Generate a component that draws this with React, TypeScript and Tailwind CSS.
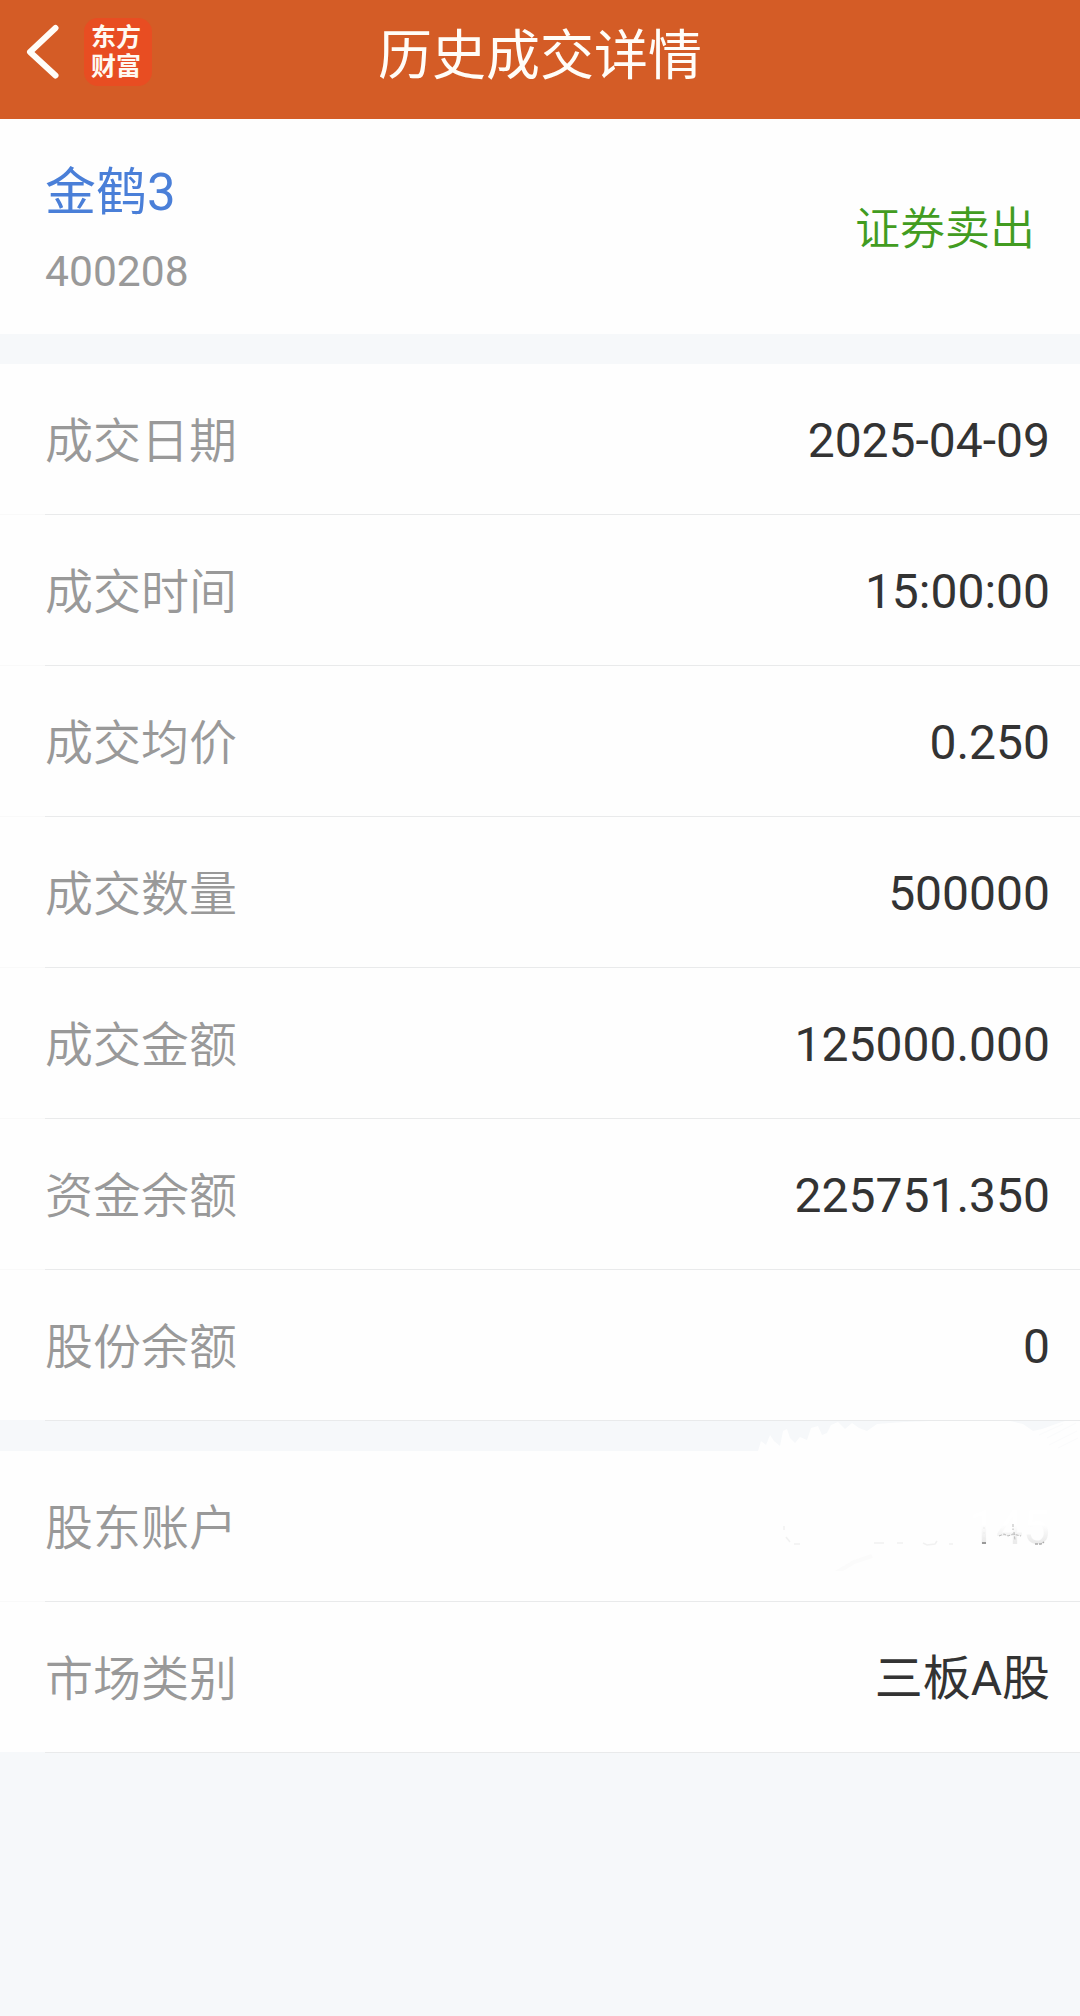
interface DetailItem {
  label: string;
  value?: string;
}

const tradeDetails: DetailItem[] = [
  { label: "成交日期", value: "2025-04-09" },
  { label: "成交时间", value: "15:00:00" },
  { label: "成交均价", value: "0.250" },
  { label: "成交数量", value: "500000" },
  { label: "成交金额", value: "125000.000" },
  { label: "资金余额", value: "225751.350" },
  { label: "股份余额", value: "0" },
];

const accountDetails: DetailItem[] = [
  { label: "股东账户" },
  { label: "市场类别", value: "三板A股" },
];

const BackIcon = () => (
  <svg width="34" height="56" viewBox="0 0 34 56" fill="none">
    <path
      d="M30.500 4 5 28 30.500 51.500"
      stroke="#fffdf8"
      strokeWidth="6"
      strokeLinecap="round"
      strokeLinejoin="round"
    />
  </svg>
);

const Logo = () => (
  <div className="flex h-17 w-17 flex-col items-center justify-center rounded-[14px] bg-[#e84d22] pr-1 text-[25px] leading-[29px] font-bold text-[#fffaf2]">
    <span>东方</span>
    <span>财富</span>
  </div>
);

// Wiped account number: a white brush stroke and what is left of the digits
const WipedAccount = () => (
  <>
    <svg
      className="absolute -top-[30px] right-0"
      width="340"
      height="150"
      viewBox="0 0 340 150"
      fill="none"
    >
      <path
        d="M18 30 21 20 26 24 30 14 34 20 40 25 43 10 47 8 50 17 55 22 60 16 67 19 71 7 78 5 82 14 87 12 91 4 98 1 105 8 112 2 119 7 127 10 137 3 150 2 165 1 190 0H270L283 3 293 10 302 8 316 3 325 0H340V31H18Z"
        fill="#fefefe"
      />
      <path d="m299 14 24-11M307 17l29-15M309 24l28-14M318 27l20-10" stroke="#fafbfc" />
      <path d="m85 163 9-10 20-12 18-6" stroke="#fbfbfb" strokeWidth="4" />
      <path
        d="M44 105v4M46 116l4 5M54 123h6M134 122h10M157 122h6M183 122l4 2 8-1 2-3M209 123h4"
        stroke="#f1f1f1"
        strokeWidth="1.5"
      />
      <path d="M244 106v15" stroke="#ececec" strokeDasharray="2 3" />
      <path d="M242 122h4" stroke="#999999" strokeWidth="2" />
      <path
        d="M259 115l5-2 4 2 5-2 8 2M273 103v6M274 111l1 8"
        stroke="#b9b9b9"
        strokeDasharray="3 1.5"
      />
      <path d="M295 123h6l3-2" stroke="#aaaaaa" strokeWidth="1.5" strokeDasharray="3 1" />
    </svg>
    <span className="bg-linear-to-b from-white from-45% to-[#ebebeb] to-75% bg-clip-text text-transparent">
      145
    </span>
  </>
);

const DetailRow = ({ label, value }: DetailItem) => (
  <li className="group relative flex h-[151px] flex-col bg-[#fefefe]">
    <div className="flex flex-1 items-center justify-between pt-1 pr-[30px] pl-[45px] text-[48px] leading-none">
      <span className="pt-0.5 font-[350] text-[#999999]">{label}</span>
      <span className="text-[#333333]">{value ?? <WipedAccount />}</span>
    </div>
    <div className="h-px bg-[#f9f9f9] pl-[45px] group-last:bg-[#f6f8fa]">
      <div className="h-full bg-[#e9eaeb]" />
    </div>
  </li>
);

const DetailList = ({ items }: { items: DetailItem[] }) => (
  <ul>
    {items.map((item) => (
      <DetailRow key={item.label} {...item} />
    ))}
  </ul>
);

const App = () => {
  return (
    <main className="flex min-h-screen flex-col bg-[#f6f8fa] font-[Roboto,'Noto_Sans_CJK_SC',sans-serif]">
      <header className="grid h-[119px] grid-cols-[1fr_auto_1fr] items-center bg-[#d45c26]">
        <div className="flex h-[103px] items-center self-start pl-[25px]">
          <button className="mr-[25px]">
            <BackIcon />
          </button>
          <Logo />
        </div>
        <h1 className="pb-[6px] text-[54px] leading-none text-[#fffdf8]">历史成交详情</h1>
      </header>

      <section className="flex h-[215px] items-center justify-between bg-[#fefefe] pt-1 pr-[45px] pl-[45px]">
        <div className="flex flex-col gap-[26px] pt-[6px]">
          <h2 className="text-[51px] leading-[52px] text-[#4a7fd8]">金鹤3</h2>
          <p className="text-[42.6px] leading-[52px] text-[#999999]">400208</p>
        </div>
        <span className="pt-px text-[45px] leading-none font-[350] text-[#429c21]">证券卖出</span>
      </section>

      <div className="flex flex-col gap-[30px] pt-[30px]">
        <DetailList items={tradeDetails} />
        <DetailList items={accountDetails} />
      </div>
    </main>
  );
};

export default App;
